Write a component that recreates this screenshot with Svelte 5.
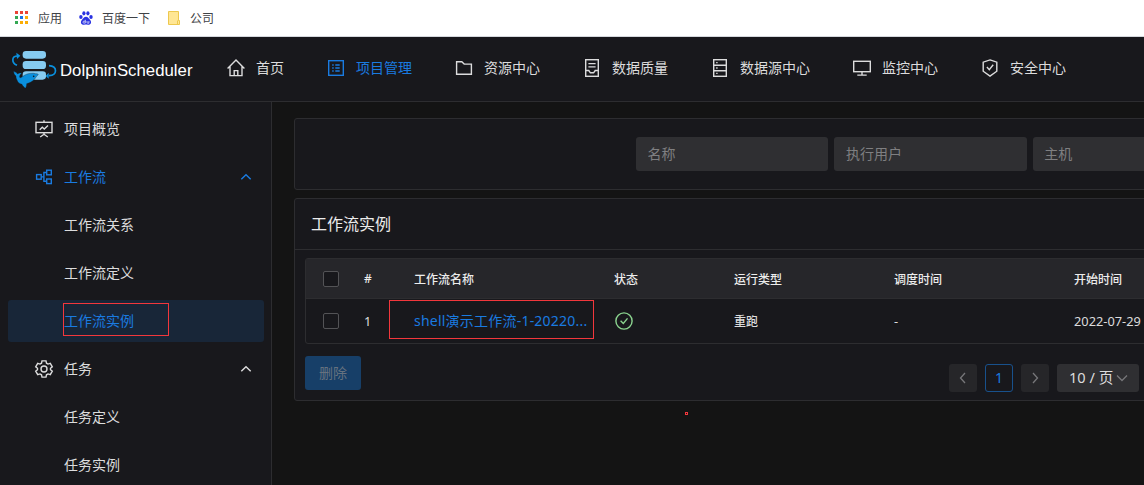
<script>
  const navItems = [
    { label: '首页', icon: 'home' },
    { label: '项目管理', icon: 'profile', active: true },
    { label: '资源中心', icon: 'folder' },
    { label: '数据质量', icon: 'container' },
    { label: '数据源中心', icon: 'database' },
    { label: '监控中心', icon: 'desktop' },
    { label: '安全中心', icon: 'safety' },
  ];

  const sideItems = [
    { label: '项目概览', icon: 'fund' },
    { label: '工作流', icon: 'partition', active: true, open: true },
    { label: '工作流关系' },
    { label: '工作流定义' },
    { label: '工作流实例', active: true, selected: true },
    { label: '任务', icon: 'setting', open: true },
    { label: '任务定义' },
    { label: '任务实例' },
  ];

  const filters = ['名称', '执行用户', '主机'];

  const rows = [
    {
      id: 1,
      name: 'shell演示工作流-1-20220...',
      type: '重跑',
      schedule: '-',
      start: '2022-07-29',
    },
  ];

  let checked = $state(false);
</script>

{#snippet icon(name)}
  <svg class="icon" viewBox="0 0 20 20">
    {#if name === 'home'}
      <path d="M1.6 10.4 10 2l8.4 8.4M4 8.6v9h12v-9M8.2 17.6v-5h3.6v5" />
    {:else if name === 'profile'}
      <rect x="2.7" y="2.7" width="14.6" height="14.6" />
      <path d="M9.3 7h4.4M9.3 10h4.4M9.3 13h4.4M6.2 7h1.5M6.2 10h1.5M6.2 13h1.5" />
    {:else if name === 'folder'}
      <path d="M2.6 3.7h5.2l2.4 2.4h7.2v10.2H2.6z" />
    {:else if name === 'container'}
      <rect x="3.7" y="1.7" width="12.6" height="16.6" />
      <path d="M6.4 5.6h7.2M6.4 8.9h7.2M3.7 12.5h3.1l1.6 2.3h3.2l1.6-2.3h3.1" />
    {:else if name === 'database'}
      <rect x="3.7" y="1.7" width="12.6" height="16.6" />
      <path d="M3.7 7.3h12.6M3.7 12.7h12.6M6.2 4.6h1.4M6.2 10h1.4M6.2 15.4h1.4" />
    {:else if name === 'desktop'}
      <rect x="1.7" y="3.3" width="16.6" height="10.4" />
      <path d="M10 13.7v3.3M5.3 17.1h9.4" />
    {:else if name === 'safety'}
      <path d="m10 1.9 6.8 2.3v9L10 18.1l-6.8-4.9v-9z" />
      <path d="m6.9 9 2.4 2.7 3.9-4.9" />
    {:else if name === 'fund'}
      <rect x="2" y="3.3" width="16" height="10.4" />
      <path d="M10 1.2v2M5.7 10.8l2.6-2.6 2 1.8L14 6.6M10 14v1.2M6.2 18l3.8-2.7 3.8 2.7" />
    {:else if name === 'partition'}
      <rect x="2.6" y="7.6" width="4.6" height="4.6" />
      <rect x="12.7" y="3.2" width="4.6" height="4.6" />
      <rect x="12.7" y="12" width="4.6" height="4.6" />
      <path d="M7.2 9.9h2.7M12.7 5.5H9.9v8.8h2.8" />
    {:else if name === 'setting'}
      <circle cx="10" cy="10" r="3" />
      <path d="M8 1.9h4l.5 2.3 1.5.9 2.3-.8 2 3.5-1.8 1.5v1.4l1.8 1.5-2 3.5-2.3-.8-1.5.9-.5 2.3H8l-.5-2.3-1.5-.9-2.3.8-2-3.5 1.8-1.5V9.3L1.7 7.8l2-3.5 2.3.8 1.5-.9z" />
    {/if}
  </svg>
{/snippet}

<div class="page">
  <div class="bookmarks">
    <svg class="bm-icon" viewBox="0 0 14 14" shape-rendering="crispEdges">
      <path fill="#ea4335" d="M0 0h3v3H0zM5 0h3v3H5zM10 0h3v3h-3z" />
      <path fill="#34a853" d="M0 5h3v3H0zM0 10h3v3H0z" />
      <path fill="#1a73e8" d="M5 5h3v3H5z" />
      <path fill="#fbad05" d="M10 5h3v3h-3zM5 10h3v3H5zM10 10h3v3h-3z" />
    </svg>
    <span class="bm-apps">应用</span>
    <svg class="bm-icon" viewBox="0 0 14 14" fill="#2932e1">
      <ellipse cx="1.9" cy="6" rx="1.7" ry="2" />
      <ellipse cx="4.9" cy="2.3" rx="1.6" ry="2.1" />
      <ellipse cx="8.9" cy="2.3" rx="1.6" ry="2.1" />
      <ellipse cx="12" cy="6" rx="1.7" ry="2" />
      <path d="M7 5.7c2 0 2.6 1.9 4 3.1 1.6 1.5 1.5 4.800-1.200 4.900-1.400.1-1.600-.2-2.800-.2s-1.400.3-2.800.2c-2.700-.1-2.800-3.400-1.200-4.900C4.400 7.600 5 5.700 7 5.700z" />
      <path d="M6.300 8.800v3.300H4.800c-1.200 0-1.200-1.900 0-1.900h1.500M8 10v1.500c0 .5.200.7.700.7h1.200V10" fill="none" stroke="#fff" stroke-width=".7" />
    </svg>
    <span class="bm-baidu">百度一下</span>
    <svg class="bm-icon" viewBox="0 0 14 14">
      <path d="M1.5.5h10v9h1v4h-11z" fill="#ffe694" stroke="#edc84e" />
      <path d="M10.5 13v-3l1-1" fill="none" stroke="#edc84e" />
    </svg>
    <span>公司</span>
  </div>

  <header class="header">
    <div class="logo">
      <svg class="logo-mark" viewBox="0 0 144 120">
        <g fill="#86cbf1">
          <rect x="38" y="9" width="70" height="23" rx="10" />
          <rect x="38" y="39" width="70" height="24" rx="10" />
          <rect x="38" y="70" width="70" height="25" rx="10" />
        </g>
        <path d="M21 52C4 44 4 24 23 24M117 53c26 2 26 28 0 30" fill="none" stroke="#0a8fdd" stroke-width="5" />
        <path d="m19 14 12 9-10 10zM116 74v18l-9-8z" fill="#0a8fdd" />
        <path d="M11 70c5 3 9 3 12 8 4-4 8-4 12-2-4 3-7 7-6 12 4 3 8-2 14-6 9-6 25-8 34-5 6 0 9 1 7 4-6 4-7 10-13 15-6 6-13 9-21 11 0 5-1 10-4 14-4-4-9-8-10-12-7-1-13-6-15-13-3-5-3-8-3-12-5-3-7-8-7-14z" fill="#0a8fdd" stroke="#18181c" stroke-width="1" />
        <circle cx="71" cy="85" r="2.500" fill="#18181c" />
      </svg>
      <span class="logo-text">DolphinScheduler</span>
    </div>
    <nav class="nav">
      {#each navItems as item}
        <a class="nav-item" class:active={item.active}>
          {@render icon(item.icon)}
          <span class="nav-label">{item.label}</span>
        </a>
      {/each}
    </nav>
  </header>

  <div class="body">
    <aside class="sider">
      {#each sideItems as item}
        <div class="side-item" class:child={!item.icon} class:active={item.active} class:selected={item.selected}>
          {#if item.icon}
            {@render icon(item.icon)}
          {/if}
          <span class="side-label">{item.label}</span>
          {#if item.open}
            <svg class="chevron" viewBox="0 0 12 12"><path d="m1.3 8.3 4.7-4.6 4.7 4.6" /></svg>
          {/if}
          {#if item.selected}
            <i class="mark mark-side"></i>
          {/if}
        </div>
      {/each}
    </aside>

    <main class="content">
      <section class="card search">
        {#each filters as label}
          <input class="filter" placeholder={label} />
        {/each}
      </section>

      <section class="card instances">
        <h2 class="card-title">工作流实例</h2>
        <div class="card-body">
          <div class="table">
            <div class="row head">
              <span class="cell"><i class="checkbox"></i></span>
              <span class="cell">#</span>
              <span class="cell">工作流名称</span>
              <span class="cell">状态</span>
              <span class="cell">运行类型</span>
              <span class="cell">调度时间</span>
              <span class="cell">开始时间</span>
            </div>
            {#each rows as row}
              <div class="row">
                <span class="cell"><i class="checkbox"></i></span>
                <span class="cell num">{row.id}</span>
                <span class="cell name">
                  <a class="link">{row.name}</a>
                  <i class="mark mark-name"></i>
                </span>
                <span class="cell">
                  <svg class="status" viewBox="0 0 20 20">
                    <circle cx="10" cy="10" r="8.1" />
                    <path d="m6.600 9.700 2.700 2.700 4.200-5" />
                  </svg>
                </span>
                <span class="cell type">{row.type}</span>
                <span class="cell num">{row.schedule}</span>
                <span class="cell num">{row.start}</span>
              </div>
            {/each}
          </div>
          <div class="footer">
            <button class="delete" disabled={!checked}>删除</button>
            <div class="pager">
              <span class="page-btn"><svg viewBox="0 0 12 12"><path d="M8 1 3.500 6 8 11" /></svg></span>
              <span class="page-btn current">1</span>
              <span class="page-btn"><svg viewBox="0 0 12 12"><path d="M4 1l4.500 5L4 11" /></svg></span>
              <span class="page-size">
                <span>10 / 页</span>
                <svg viewBox="0 0 12 12"><path d="m1 3.500 5 5 5-5" /></svg>
              </span>
            </div>
          </div>
        </div>
      </section>
      <i class="mark mark-dot"></i>
    </main>
  </div>
</div>

<style>
  :global(body) {
    background: #141414;
    overflow: hidden;
  }

  .page {
    display: flex;
    flex-direction: column;
    width: 1144px;
    height: 485px;
    overflow: hidden;
    box-sizing: border-box;
    background: #141414;
    color: #dcdcdd;
    font-family: 'Noto Sans', 'Noto Sans CJK SC', sans-serif;
    font-size: 14px;
  }

  .page * {
    box-sizing: border-box;
  }

  svg {
    flex: none;
    display: block;
  }

  .bookmarks {
    display: flex;
    align-items: center;
    flex: none;
    height: 37px;
    padding: 0 0 1px 15px;
    border-bottom: 1px solid #d5d8dd;
    background: #fff;
    color: #3f4246;
    font-size: 12px;
  }

  .bm-icon {
    width: 14px;
    height: 14px;
    margin-right: 9px;
  }

  .bm-apps,
  .bm-baidu {
    margin-right: 17px;
  }

  .header {
    display: flex;
    flex: none;
    height: 65px;
    border-bottom: 1px solid #2d2d30;
    background: #18181c;
  }

  .logo {
    display: flex;
    align-items: center;
    width: 226px;
    padding-left: 10px;
  }

  .logo-mark {
    width: 48px;
    height: 40px;
    margin-bottom: 2px;
  }

  .logo-text {
    margin: 3px 0 0 2px;
    color: #fff;
    font-family: 'Liberation Sans', sans-serif;
    font-size: 16.8px;
  }

  .nav {
    display: flex;
    align-items: center;
    gap: 42px;
    height: 62px;
  }

  .nav-item {
    display: flex;
    align-items: center;
    gap: 10px;
    white-space: nowrap;
  }

  .nav-label,
  .side-label {
    padding-bottom: 2px;
  }

  .icon {
    width: 20px;
    height: 20px;
    fill: none;
    stroke: currentColor;
    stroke-width: 1.4;
  }

  .active {
    color: #1a7be0;
  }

  .body {
    display: flex;
    flex: 1;
    min-height: 0;
  }

  .sider {
    display: flex;
    flex-direction: column;
    gap: 6px;
    flex: none;
    width: 272px;
    padding: 6px 7px 0 8px;
    border-right: 1px solid #2d2d30;
    background: #18181c;
  }

  .side-item {
    position: relative;
    display: flex;
    align-items: center;
    gap: 10px;
    flex: none;
    height: 42px;
    padding: 0 12px 0 26px;
    border-radius: 3px;
  }

  .side-item.child {
    padding-left: 56px;
  }

  .side-item.selected {
    background: #182638;
  }

  .side-label {
    flex: 1;
  }

  .chevron {
    width: 12px;
    height: 12px;
    fill: none;
    stroke: currentColor;
    stroke-width: 1.4;
  }

  .content {
    position: relative;
    display: flex;
    flex-direction: column;
    gap: 8px;
    flex: 1;
    min-width: 0;
    padding: 16px 0 0 22px;
    overflow: hidden;
  }

  .card {
    flex: none;
    width: 900px;
    border: 1px solid #2d2d30;
    border-radius: 3px;
    background: #18181c;
  }

  .search {
    display: flex;
    align-items: center;
    gap: 6px;
    height: 72px;
    padding-left: 341px;
  }

  .filter {
    flex: none;
    width: 192.4px;
    height: 34px;
    padding: 0 12px 2px 11.5px;
    border: none;
    border-radius: 3px;
    outline: none;
    background: #2f2f32;
    color: #dcdcdd;
    font: inherit;
  }

  .filter::placeholder {
    color: #7f7f81;
    opacity: 1;
  }

  .instances {
    height: 203px;
  }

  .card-title {
    display: flex;
    align-items: center;
    height: 51px;
    margin: 0;
    padding: 0 16px 2px;
    border-bottom: 1px solid #2d2d30;
    color: #ececec;
    font-size: 16px;
    font-weight: 400;
  }

  .card-body {
    padding: 8px 10px;
  }

  .table {
    width: 1000px;
    border: 1px solid #2d2d30;
    border-radius: 3px;
    font-size: 12px;
  }

  .row {
    display: grid;
    grid-template-columns: 58px 50px 200px 120px 160px 180px 1fr;
    align-items: center;
    height: 44px;
  }

  .row.head {
    height: 40px;
    border-bottom: 1px solid #2d2d30;
    background: #26262a;
    color: #ececec;
    font-weight: 500;
  }

  .cell {
    display: flex;
    align-items: center;
  }

  .num {
    padding-bottom: 1px;
    font-size: 12.8px;
  }

  .type {
    padding-bottom: 1px;
    font-weight: 500;
  }

  .checkbox {
    width: 16px;
    height: 16px;
    margin-left: 17px;
    border: 1px solid #535356;
    border-radius: 2px;
    background: #18181c;
  }

  .name {
    position: relative;
  }

  .link {
    padding-bottom: 3px;
    color: #1a7be0;
    font-size: 14px;
    letter-spacing: 0.22px;
  }

  .status {
    width: 20px;
    height: 20px;
    fill: none;
    stroke: #8bd48f;
    stroke-width: 1.4;
  }

  .footer {
    display: flex;
    gap: 588px;
    padding-top: 12px;
  }

  .delete {
    flex: none;
    width: 56px;
    height: 34px;
    padding: 0 0 2px;
    border: none;
    border-radius: 3px;
    background: #173f68;
    color: #66727f;
    font: inherit;
  }

  .pager {
    display: flex;
    gap: 8px;
    padding-top: 8px;
  }

  .page-btn,
  .page-size {
    display: flex;
    align-items: center;
    justify-content: center;
    width: 28px;
    height: 28px;
    border-radius: 3px;
    background: #262629;
  }

  .page-btn.current {
    padding-bottom: 2px;
    border: 1px solid #18518c;
    background: none;
    color: #1a7be0;
  }

  .page-btn svg,
  .page-size svg {
    width: 12px;
    height: 12px;
    fill: none;
    stroke: #77777a;
    stroke-width: 1.3;
  }

  .page-size {
    justify-content: space-between;
    width: 82px;
    padding: 0 11px 0 12px;
    background: #2f2f32;
    white-space: nowrap;
  }

  .page-size span {
    padding-bottom: 3px;
    font-size: 14.6px;
  }

  /* red highlight frames laid over the page */
  .mark {
    position: absolute;
    border: 1px solid #f2373c;
  }

  .mark-side {
    left: 55px;
    top: 3px;
    width: 106px;
    height: 33px;
  }

  .mark-name {
    left: -25px;
    top: 50%;
    width: 205px;
    height: 39px;
    margin-top: -21px;
  }

  .mark-dot {
    left: 413px;
    top: 310px;
    width: 3px;
    height: 3px;
  }
</style>
